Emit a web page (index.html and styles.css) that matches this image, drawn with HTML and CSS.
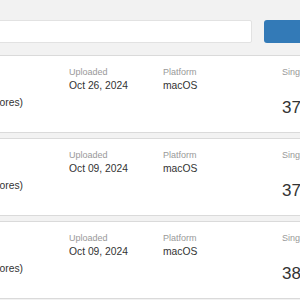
FILE: index.html
```html
<!DOCTYPE html>
<html lang="en">
<head>
    <meta charset="UTF-8">
    <meta name="viewport" content="width=device-width, initial-scale=1.0">
    <title>Search Results</title>
    <link rel="stylesheet" href="styles.css">
</head>
<body>
    <div class="page">
        <form class="search">
            <input type="text" class="search-input">
            <button type="submit" class="search-btn">Search</button>
        </form>

        <div class="result">
            <div class="col col-name">
                <a class="model" href="#">MacBook Pro</a>
                <div class="cpu">Apple M1 Max @ 3.2 GHz (10 cores)</div>
            </div>
            <div class="col col-uploaded">
                <div class="label">Uploaded</div>
                <div class="value">Oct 26, 2024</div>
            </div>
            <div class="col col-platform">
                <div class="label">Platform</div>
                <div class="value">macOS</div>
            </div>
            <div class="col col-score">
                <div class="label">Single-Core Score</div>
                <div class="score">3712</div>
            </div>
        </div>

        <div class="result">
            <div class="col col-name">
                <a class="model" href="#">MacBook Pro</a>
                <div class="cpu">Apple M1 Max @ 3.2 GHz (10 cores)</div>
            </div>
            <div class="col col-uploaded">
                <div class="label">Uploaded</div>
                <div class="value">Oct 09, 2024</div>
            </div>
            <div class="col col-platform">
                <div class="label">Platform</div>
                <div class="value">macOS</div>
            </div>
            <div class="col col-score">
                <div class="label">Single-Core Score</div>
                <div class="score">3748</div>
            </div>
        </div>

        <div class="result">
            <div class="col col-name">
                <a class="model" href="#">MacBook Pro</a>
                <div class="cpu">Apple M1 Max @ 3.2 GHz (10 cores)</div>
            </div>
            <div class="col col-uploaded">
                <div class="label">Uploaded</div>
                <div class="value">Oct 09, 2024</div>
            </div>
            <div class="col col-platform">
                <div class="label">Platform</div>
                <div class="value">macOS</div>
            </div>
            <div class="col col-score">
                <div class="label">Single-Core Score</div>
                <div class="score">3805</div>
            </div>
        </div>
    </div>
</body>
</html>
```

FILE: styles.css
```css
:root {
    --bg-color: #f2f2f2;
    --border-color: #dadada;
    --text-color: #333;
    --label-color: #999;
    --primary-color: #337ab7;
}

* {
    margin: 0;
    padding: 0;
    box-sizing: border-box;
}

body {
    font-family: 'Liberation Sans', Arial, sans-serif;
    background: var(--bg-color);
    color: var(--text-color);
    overflow: hidden;
}

.page {
    width: 547px;
    margin-left: -163px;
    padding-top: 20px;
}

.search {
    display: flex;
    gap: 12px;
    margin-bottom: 12px;
}

.search-input {
    flex: 1;
    height: 23px;
    background: white;
    border: 1px solid #e2e2e2;
    border-radius: 2px;
}

.search-btn {
    width: 120px;
    height: 23px;
    border: none;
    border-radius: 3px;
    background: var(--primary-color);
    color: white;
    font-size: 10px;
}

.result {
    display: flex;
    height: 78px;
    margin-bottom: 5px;
    padding: 10px 16px 0;
    background: white;
    border: 1px solid var(--border-color);
}

.col {
    white-space: nowrap;
}

.col-name {
    width: 215px;
}

.col-uploaded {
    width: 94px;
}

.col-platform {
    width: 119px;
}

.col-score {
    flex: 1;
}

.model {
    display: block;
    height: 30px;
    font-size: 12px;
    line-height: 16px;
    color: var(--primary-color);
    text-decoration: none;
}

.cpu {
    font-size: 10.3px;
    line-height: 14px;
}

.label {
    font-size: 9px;
    line-height: 12px;
    color: var(--label-color);
    margin-bottom: 1px;
}

.value {
    font-size: 10.3px;
    line-height: 14px;
}

.score {
    margin-top: 20px;
    font-size: 17px;
    line-height: 20px;
}
```
